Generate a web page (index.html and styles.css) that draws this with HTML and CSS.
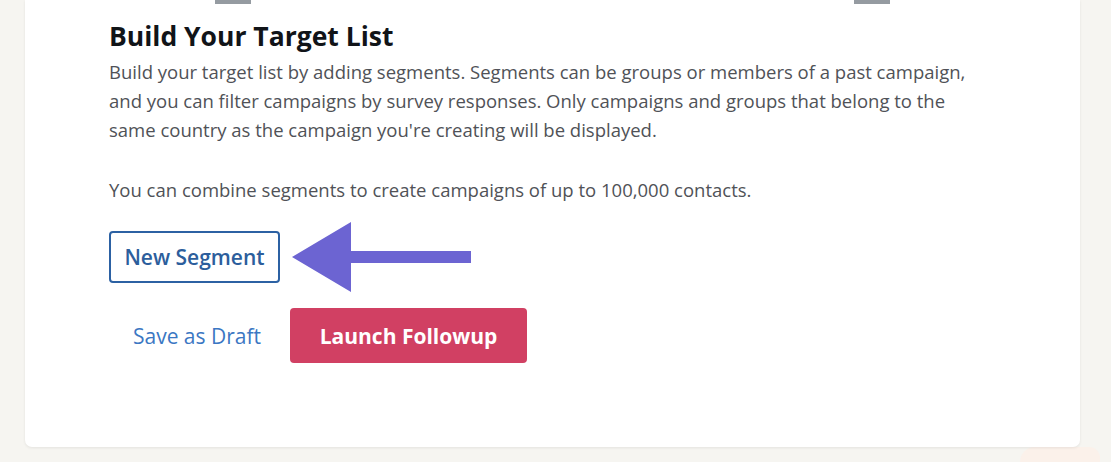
FILE: index.html
```html
<!DOCTYPE html>
<html lang="en">
<head>
<meta charset="utf-8">
<title>Build Your Target List</title>
<link rel="stylesheet" href="styles.css">
</head>
<body>
<div class="page">
  <div class="card">
    <div class="top-marks"><span class="mark"></span><span class="mark"></span></div>
    <h2 class="title">Build Your Target List</h2>
    <p class="desc">Build your target list by adding segments. Segments can be groups or members of a past campaign, and you can filter campaigns by survey responses. Only campaigns and groups that belong to the same country as the campaign you're creating will be displayed.</p>
    <p class="desc desc-second">You can combine segments to create campaigns of up to 100,000 contacts.</p>
    <div class="segment-row">
      <button class="btn-outline">New Segment</button>
      <svg class="arrow" width="180" height="70" viewBox="0 0 180 70" aria-hidden="true">
        <polygon points="1,35 60,0 60,29 180,29 180,41 60,41 60,70" fill="#6c64d2"/>
      </svg>
    </div>
    <div class="actions">
      <a class="btn-link" href="#">Save as Draft</a>
      <button class="btn-primary">Launch Followup</button>
    </div>
  </div>
  <div class="blob"></div>
</div>
</body>
</html>
```
FILE: styles.css
```css
html, body {
  margin: 0;
  padding: 0;
}
body {
  background: #f6f5f1;
  font-family: "Open Sans", "Noto Sans", sans-serif;
  overflow: hidden;
  height: 462px;
}
.page {
  position: relative;
  height: 462px;
  overflow: hidden;
}
.card {
  margin: 0 0 0 25px;
  width: 1055px;
  box-sizing: border-box;
  background: #ffffff;
  border-radius: 0 0 7px 7px;
  box-shadow: 0 1px 3px rgba(0, 0, 0, 0.08);
  padding: 0 84px 84px 84px;
  height: 447px;
}
.top-marks {
  display: flex;
  justify-content: space-between;
  margin: 0 106px;
  height: 4px;
}
.mark {
  width: 36px;
  height: 4px;
  background: #959ba1;
}
.title {
  margin: 15px 0 0 0;
  font-size: 26.5px;
  line-height: 34px;
  font-weight: 700;
  color: #111418;
}
.desc {
  margin: 4px 0 0 0;
  font-size: 18.5px;
  line-height: 29px;
  color: #505257;
  max-width: 880px;
}
.desc-second {
  margin-top: 31px;
}
.segment-row {
  display: flex;
  align-items: center;
  margin-top: 27px;
  gap: 11px;
  height: 52px;
}
.btn-outline {
  height: 52px;
  width: 171px;
  box-sizing: border-box;
  border: 2px solid #2c61a3;
  border-radius: 4px;
  background: #ffffff;
  color: #2c5e9c;
  font-family: inherit;
  font-size: 21px;
  font-weight: 600;
  padding: 0;
}
.arrow {
  display: block;
  margin: -9px 0;
}
.actions {
  display: flex;
  align-items: center;
  margin-top: 25px;
}
.btn-link {
  display: block;
  width: 176px;
  margin-right: 5px;
  text-align: center;
  color: #3b77c3;
  font-size: 21px;
  text-decoration: none;
}
.btn-primary {
  height: 55px;
  width: 237px;
  border: none;
  border-radius: 4px;
  background: #d14063;
  color: #ffffff;
  font-family: inherit;
  font-size: 21px;
  font-weight: 700;
  padding: 0;
}
.blob {
  position: absolute;
  left: 1020px;
  top: 447px;
  width: 80px;
  height: 15px;
  border-radius: 22px 16px 0 0;
  background: #fbf1ea;
  z-index: -1;
}
```
